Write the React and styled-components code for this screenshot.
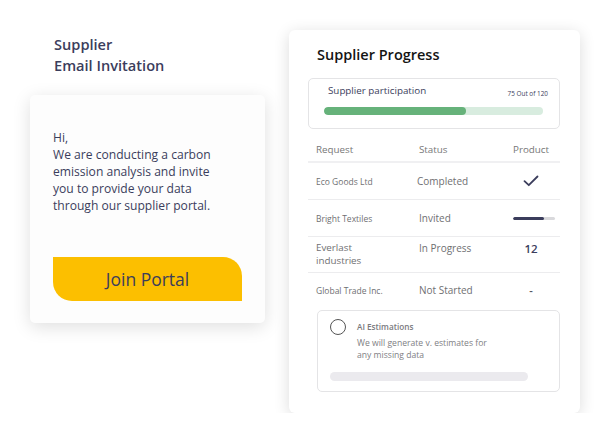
import React from "react";
import styled, { createGlobalStyle } from "styled-components";

const GlobalStyle = createGlobalStyle`
  body {
    margin: 0;
    background: #ffffff;
    font-family: "Open Sans", "Liberation Sans", sans-serif;
  }
`;

const rows = [
  { name: ["Eco Goods Ltd"], status: "Completed", product: "check", h: 37, shift: -2 },
  { name: ["Bright Textiles"], status: "Invited", product: "bar", h: 37 },
  { name: ["Everlast", "industries"], status: "In Progress", product: "12", h: 36, top: true },
  { name: ["Global Trade Inc."], status: "Not Started", product: "-", h: 34 },
];

const CheckIcon = () => (
  <svg width="16" height="12" viewBox="0 0 16 12" fill="none">
    <path d="M1.5 6.2 L5.8 10.2 L14.5 1.5" stroke="#3b3d5c" strokeWidth="1.8" strokeLinecap="round" strokeLinejoin="round" />
  </svg>
);

const Product = ({ kind }) => {
  if (kind === "check") return <CheckIcon />;
  if (kind === "bar")
    return (
      <MiniTrack>
        <MiniFill style={{ width: "74%" }} />
      </MiniTrack>
    );
  if (kind === "-") return <Dash>-</Dash>;
  return <Count>{kind}</Count>;
};

const App = () => {
  const done = 75;
  const total = 120;
  return (
    <>
      <GlobalStyle />
      <Page>
        <LeftColumn>
          <Heading>
            Supplier
            <br />
            Email Invitation
          </Heading>
          <EmailCard>
            <EmailText>
              Hi,
              <br />
              We are conducting a carbon
              <br />
              emission analysis and invite
              <br />
              you to provide your data
              <br />
              through our supplier portal.
            </EmailText>
            <JoinButton>Join Portal</JoinButton>
          </EmailCard>
        </LeftColumn>
        <ProgressCard>
          <Title>Supplier Progress</Title>
          <ParticipationBox>
            <ParticipationHead>
              <ParticipationLabel>Supplier participation</ParticipationLabel>
              <ParticipationCount>
                {done} Out of {total}
              </ParticipationCount>
            </ParticipationHead>
            <Track>
              <Fill style={{ width: "65%" }} />
            </Track>
          </ParticipationBox>
          <Table>
            <HeaderRow>
              <HeadCell>Request</HeadCell>
              <HeadCell>Status</HeadCell>
              <HeadCell $right>Product</HeadCell>
            </HeaderRow>
            {rows.map((r) => (
              <Row key={r.status} $top={r.top} $h={r.h}>
                <NameCell $large={r.name.length > 1}>
                  {r.name.map((part, i) => (
                    <span key={part}>
                      {i > 0 && <br />}
                      {part}
                    </span>
                  ))}
                </NameCell>
                <StatusCell $shift={r.shift || 0}>{r.status}</StatusCell>
                <ProductCell>
                  <Product kind={r.product} />
                </ProductCell>
              </Row>
            ))}
          </Table>
          <AiBox>
            <AiHead>
              <Radio />
              <AiTexts>
                <AiTitle>AI Estimations</AiTitle>
                <AiDesc>
                  We will generate v. estimates for
                  <br />
                  any missing data
                </AiDesc>
              </AiTexts>
            </AiHead>
            <AiBar />
          </AiBox>
        </ProgressCard>
      </Page>
    </>
  );
};

export default App;

const Page = styled.div`
  display: flex;
  align-items: flex-start;
  gap: 24px;
  padding: 30px 0 0 30px;
`;

const LeftColumn = styled.div`
  display: flex;
  flex-direction: column;
  width: 235px;
  padding-top: 4px;
`;

const Heading = styled.h2`
  margin: 0 0 19px 24px;
  font-size: 14.6px;
  line-height: 21px;
  font-weight: 600;
  color: #3b3d5c;
`;

const EmailCard = styled.div`
  background: #fdfdfd;
  border-radius: 5px;
  box-shadow: 0 4px 18px rgba(0, 0, 0, 0.13);
  padding: 34px 23px 22px 23px;
  height: 228px;
  box-sizing: border-box;
  display: flex;
  flex-direction: column;
`;

const EmailText = styled.p`
  margin: 0;
  font-size: 12.1px;
  line-height: 17px;
  color: #3b3d5c;
  white-space: nowrap;
`;

const JoinButton = styled.button`
  margin-top: auto;
  width: 189px;
  height: 44px;
  border: none;
  background: #fcbf00;
  border-radius: 0 19px 0 19px;
  font-family: inherit;
  font-size: 17.5px;
  color: #3b3d5c;
  cursor: pointer;
`;

const ProgressCard = styled.div`
  width: 291px;
  height: 383px;
  box-sizing: border-box;
  background: #ffffff;
  border-radius: 6px;
  box-shadow: 0 3px 16px rgba(0, 0, 0, 0.14);
  padding: 16px 20px 21px 19px;
  display: flex;
  flex-direction: column;
`;

const Title = styled.h1`
  margin: 0 0 14px 9px;
  font-size: 14.5px;
  line-height: 18px;
  font-weight: 600;
  color: #141414;
`;

const ParticipationBox = styled.div`
  border: 1px solid #e4e4e6;
  border-radius: 5px;
  height: 51px;
  box-sizing: border-box;
  padding: 5px 16px 0 15px;
`;

const ParticipationHead = styled.div`
  display: flex;
  justify-content: space-between;
  align-items: flex-start;
  padding: 0 0 0 4px;
  margin-right: -5px;
`;

const ParticipationLabel = styled.span`
  font-size: 9.8px;
  line-height: 14px;
  color: #3b3d5c;
`;

const ParticipationCount = styled.span`
  font-size: 6.4px;
  margin-top: 5px;
  color: #3b3d5c;
`;

const Track = styled.div`
  margin-top: 9px;
  height: 8px;
  border-radius: 4px;
  background: #d8ecdf;
  overflow: hidden;
`;

const Fill = styled.div`
  height: 100%;
  border-radius: 4px;
  background: #66b27a;
`;

const Table = styled.div`
  margin-top: 12px;
  display: flex;
  flex-direction: column;
`;

const grid = `
  display: grid;
  grid-template-columns: 103px 84px 1fr;
  padding: 0 11px 0 8px;
`;

const HeaderRow = styled.div`
  ${grid}
  height: 22px;
  box-sizing: border-box;
  padding-bottom: 3px;
  align-items: center;
  border-bottom: 2px solid #f0f0f2;
`;

const HeadCell = styled.span`
  font-size: 9.8px;
  color: #777777;
  text-align: ${({ $right }) => ($right ? "right" : "left")};
`;

const Row = styled.div`
  ${grid}
  height: ${({ $h }) => $h}px;
  box-sizing: border-box;
  align-items: ${({ $top }) => ($top ? "start" : "center")};
  padding-top: ${({ $top }) => ($top ? "4px" : "0")};
  border-bottom: 1px solid #ececee;
  &:last-child {
    border-bottom: none;
  }
`;

const NameCell = styled.span`
  font-size: ${({ $large }) => ($large ? "9.8px" : "8.5px")};
  line-height: 13px;
  color: #6f6f72;
  white-space: nowrap;
`;

const StatusCell = styled.span`
  font-size: 10px;
  color: #6f6f72;
  margin-left: ${({ $shift }) => $shift}px;
`;

const ProductCell = styled.div`
  display: flex;
  justify-content: center;
  padding-left: 10px;
`;

const MiniTrack = styled.div`
  width: 42px;
  height: 3px;
  border-radius: 2px;
  background: #d9d9dc;
  overflow: hidden;
`;

const MiniFill = styled.div`
  height: 100%;
  border-radius: 2px;
  background: #3b3d5c;
`;

const Count = styled.span`
  font-size: 11.5px;
  font-weight: 600;
  color: #3b3d5c;
`;

const Dash = styled.span`
  font-size: 11px;
  font-weight: 600;
  color: #55575f;
`;

const AiBox = styled.div`
  margin: auto 0 0 9px;
  border: 1px solid #e4e4e6;
  border-radius: 5px;
  height: 82px;
  box-sizing: border-box;
  padding: 8px 13px 10px 12px;
  display: flex;
  flex-direction: column;
`;

const AiHead = styled.div`
  display: flex;
  gap: 11px;
`;

const Radio = styled.span`
  width: 14px;
  height: 14px;
  border: 1px solid #555;
  border-radius: 50%;
  flex-shrink: 0;
`;

const AiTexts = styled.div`
  display: flex;
  flex-direction: column;
  padding-top: 2px;
`;

const AiTitle = styled.span`
  font-size: 8.2px;
  font-weight: 600;
  color: #7a7a7e;
`;

const AiDesc = styled.span`
  margin-top: 5px;
  font-size: 8.6px;
  line-height: 12px;
  color: #808084;
`;

const AiBar = styled.div`
  margin-top: auto;
  width: 198px;
  height: 9px;
  border-radius: 5px;
  background: #ebeaee;
`;
